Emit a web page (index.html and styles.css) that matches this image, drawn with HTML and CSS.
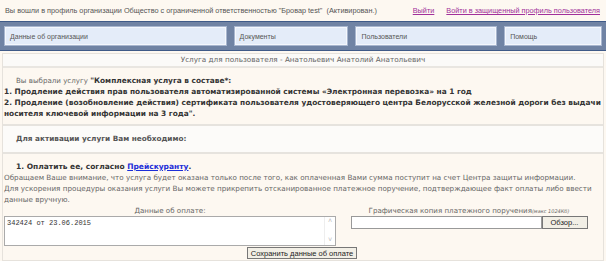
FILE: index.html
```html
<!DOCTYPE html>
<html lang="ru">
<head>
<meta charset="utf-8">
<title>Услуга для пользователя</title>
<link rel="stylesheet" href="styles.css">
</head>
<body>
<div class="topbar">
  <span class="login-info">Вы вошли в профиль организации Общество с ограниченной ответственностью "Бровар test" &nbsp;(Активирован.)</span>
  <span class="top-links"><a href="#">Выйти</a><a href="#">Войти в защищенный профиль пользователя</a></span>
</div>
<nav class="nav">
  <a class="nav-item w1" href="#">Данные об организации</a>
  <a class="nav-item w2" href="#">Документы</a>
  <a class="nav-item w3" href="#">Пользователи</a>
  <a class="nav-item w4" href="#">Помощь</a>
</nav>
<main class="panel">
  <div class="panel-head">Услуга для пользователя - Анатольевич Анатолий Анатольевич</div>
  <section class="choice">
    <p class="indent"><span class="muted">Вы выбрали услугу </span><b>"Комплексная услуга в составе*:</b></p>
    <p><b>1. Продление действия прав пользователя автоматизированной системы «Электронная перевозка» на 1 год</b></p>
    <p><b>2. Продление (возобновление действия) сертификата пользователя удостоверяющего центра Белорусской железной дороги без выдачи носителя ключевой информации на 3 года".</b></p>
  </section>
  <div class="need">Для активации услуги Вам необходимо:</div>
  <section class="pay">
    <p class="indent step"><b>1. Оплатить ее, согласно <a href="#">Прейскуранту</a>.</b></p>
    <p class="note">Обращаем Ваше внимание, что услуга будет оказана только после того, как оплаченная Вами сумма поступит на счет Центра защиты информации.<br>Для ускорения процедуры оказания услуги Вы можете прикрепить отсканированное платежное поручение, подтверждающее факт оплаты либо ввести<br>данные вручную.</p>
    <div class="form">
      <div class="col-left">
        <label class="lbl">Данные об оплате:</label>
        <div class="textarea">
          <span class="ta-text">342424 от 23.06.2015</span>
          <span class="scroll"><span class="arr">˄</span><span class="arr">˅</span></span>
        </div>
      </div>
      <div class="col-right">
        <label class="lbl">Графическая копия платежного поручения<i class="max">(макс 1024Кб)</i></label>
        <div class="file"><span class="file-input"></span><span class="btn browse">Обзор...</span></div>
      </div>
    </div>
    <div class="save-row"><span class="btn save">Сохранить данные об оплате</span></div>
  </section>
</main>
</body>
</html>
```
FILE: styles.css
```css
html, body { margin: 0; padding: 0; }
body {
  width: 606px;
  height: 261px;
  overflow: hidden;
  background: #fdf8f1;
  font-family: "DejaVu Sans", Verdana, sans-serif;
  font-size: 7.1px;
  color: #666;
}
p { margin: 0; }
.topbar {
  height: 21px;
  display: flex;
  align-items: center;
  justify-content: space-between;
  padding: 0 6px 0 5px;
  font-family: "Liberation Sans", Arial, sans-serif;
  font-size: 7.3px;
  color: #555;
  white-space: nowrap;
}
.top-links a { color: #a1309a; margin-left: 12px; }
.nav {
  display: flex;
  gap: 7px;
  height: 20px;
  padding: 4px;
  background: #7083a4;
  border-top: 1px solid #3f5a88;
  border-bottom: 1px solid #3f5a88;
}
.nav-item {
  display: flex;
  align-items: center;
  padding-left: 5px;
  box-sizing: border-box;
  background: #e4ecf9;
  border: 1px solid #a8b6cf;
  box-shadow: inset 0 0 0 1px #f4f7fd;
  font-family: "Liberation Sans", Arial, sans-serif;
  font-size: 7px;
  color: #555;
  text-decoration: none;
}
.w1 { width: 223px; }
.w2 { width: 115px; }
.w3 { width: 142px; }
.w4 { width: 98px; }
.panel {
  margin: 2px 2px 0 2px;
  border: 1px solid #e6e2dc;
}
.panel-head {
  height: 12px;
  line-height: 12px;
  text-align: center;
  background: #fbfaf8;
  border-bottom: 2px solid #e9e6e1;
  color: #666;
  font-size: 7.25px;
}
.choice {
  padding: 7px 1px 5px 1px;
  line-height: 11px;
  color: #333;
  font-size: 7.4px;
}
.choice .muted { font-size: 7.1px; }
.indent { padding-left: 12px; }
.muted { color: #666; }
.need {
  height: 26px;
  line-height: 26px;
  background: #fcfbf9;
  border-top: 2px solid #e6e3de;
  border-bottom: 2px solid #e6e3de;
  padding-left: 13px;
  font-weight: bold;
  font-size: 7.3px;
  color: #555;
}
.pay { padding: 7px 1px 0 1px; line-height: 11px; }
.step { color: #333; font-size: 7.5px; }
.step a { color: #1c2ed8; }
.note { color: #666; font-size: 7.2px; white-space: nowrap; }
.form {
  display: flex;
  margin-top: 1px;
}
.col-left { width: 332px; display: flex; flex-direction: column; align-items: stretch; }
.col-right { flex: 1; display: flex; flex-direction: column; align-items: center; }
.lbl { display: block; text-align: center; height: 10px; line-height: 10px; color: #666; }
.max { font-size: 5px; }
.textarea {
  height: 30px;
  box-sizing: border-box;
  border: 1px solid #aaa;
  background: #fff;
  display: flex;
  justify-content: space-between;
  font-family: "Liberation Mono", monospace;
  font-size: 7px;
  color: #333;
}
.ta-text { padding: 2px 2px; line-height: 9px; }
.scroll {
  width: 10px;
  border-left: 1px solid #eee;
  display: flex;
  flex-direction: column;
  justify-content: space-between;
  color: #bbb;
  font-size: 7px;
  line-height: 9px;
  text-align: center;
}
.file { display: flex; margin-top: 0; }
.file-input {
  width: 189px;
  height: 11px;
  background: #fff;
  border: 1px solid #999;
}
.btn {
  display: inline-flex;
  align-items: center;
  justify-content: center;
  box-sizing: border-box;
  background: #f2efe6;
  border: 1px solid #777;
  font-family: "Liberation Sans", Arial, sans-serif;
  font-size: 7.5px;
  color: #222;
  white-space: nowrap;
}
.browse { width: 46px; height: 13px; }
.save-row { display: flex; justify-content: center; padding: 1px 2px 1px 0; }
.save { width: 110px; height: 12px; }
```
